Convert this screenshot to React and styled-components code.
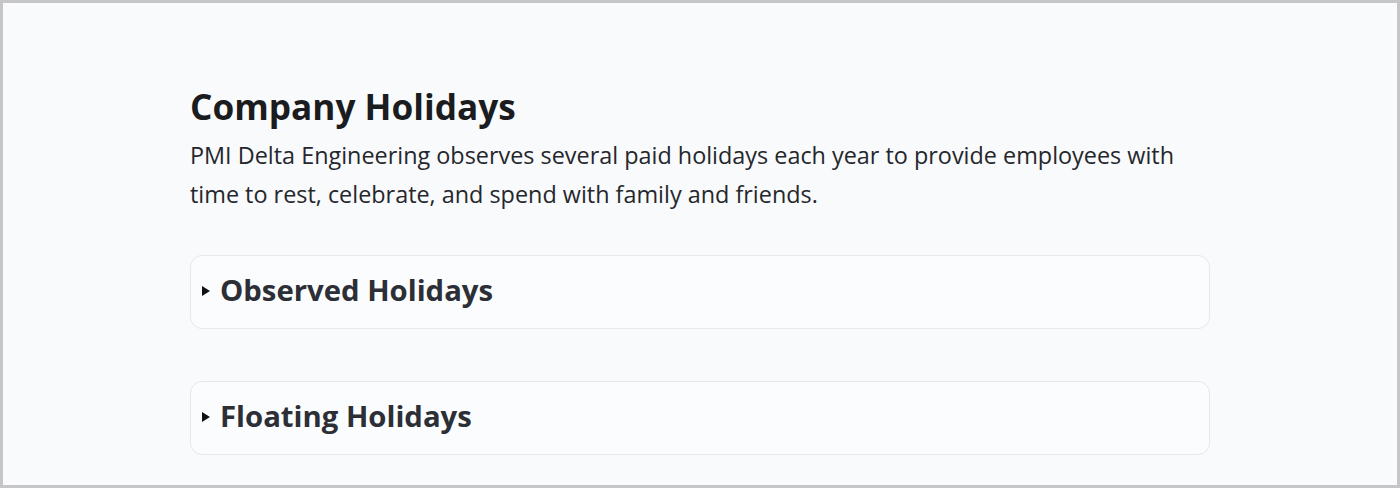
import React from "react";
import styled, { createGlobalStyle } from "styled-components";

const Global = createGlobalStyle`
  html, body { margin: 0; padding: 0; }
  body {
    font-family: "Open Sans", "Noto Sans", sans-serif;
    background: #f9fafc;
  }
`;

const Frame = styled.div`
  box-sizing: border-box;
  width: 1400px;
  height: 488px;
  border: 3px solid #c6c6c8;
  background: #f9fafc;
  overflow: hidden;
`;

const Content = styled.main`
  max-width: 1020px;
  margin: 0 auto;
  padding-top: 82px;
`;

const Title = styled.h1`
  margin: 0;
  font-size: 35.2px;
  line-height: 42px;
  font-weight: 700;
  color: #1b1c20;
`;

const Lead = styled.p`
  margin: 8.5px 0 0;
  font-size: 23.4px;
  line-height: 39px;
  color: #25272c;
`;

const Sections = styled.div`
  display: flex;
  flex-direction: column;
  gap: 52px;
  margin-top: 41.5px;
`;

const Card = styled.details`
  background: #fbfcfd;
  border: 1px solid #e6e8ec;
  border-radius: 12px;
`;

const Summary = styled.summary`
  display: flex;
  align-items: center;
  gap: 10px;
  padding: 12px 11px 16px;
  font-size: 29.3px;
  line-height: 44px;
  font-weight: 700;
  color: #2c2f36;
  cursor: pointer;
  list-style: none;
  &::-webkit-details-marker { display: none; }
`;

const Caret = styled.span`
  width: 0;
  height: 0;
  margin-top: 1px;
  border-top: 5.5px solid transparent;
  border-bottom: 5.5px solid transparent;
  border-left: 8px solid #111;
`;

const sections = ["Observed Holidays", "Floating Holidays"];

export default function App() {
  return (
    <>
      <Global />
      <Frame>
        <Content>
          <Title>Company Holidays</Title>
          <Lead>
            PMI Delta Engineering observes several paid holidays each year to provide employees with
            time to rest, celebrate, and spend with family and friends.
          </Lead>
          <Sections>
            {sections.map((s) => (
              <Card key={s}>
                <Summary>
                  <Caret />
                  {s}
                </Summary>
              </Card>
            ))}
          </Sections>
        </Content>
      </Frame>
    </>
  );
}
